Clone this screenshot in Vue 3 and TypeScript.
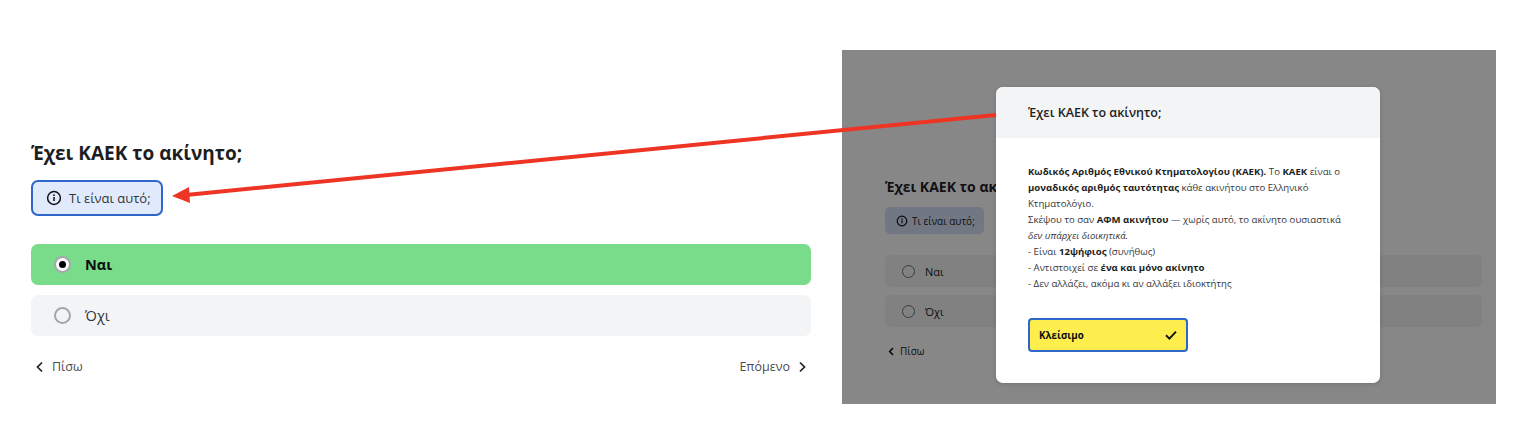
<template>
  <div class="stage">
    <section class="form">
      <h1 class="title">Έχει ΚΑΕΚ το ακίνητο;</h1>
      <button class="info-btn">
        <svg class="info-icon" width="16" height="16" viewBox="0 0 16 16">
          <circle cx="8" cy="8" r="6.4" fill="none" stroke="#111" stroke-width="1.5" />
          <rect x="7.3" y="7" width="1.5" height="4" fill="#111" />
          <circle cx="8" cy="5.2" r="0.9" fill="#111" />
        </svg>
        Τι είναι αυτό;
      </button>
      <div class="options">
        <div class="option selected">
          <span class="radio"><span class="dot"></span></span>
          <span>Ναι</span>
        </div>
        <div class="option">
          <span class="radio"></span>
          <span>Όχι</span>
        </div>
      </div>
      <div class="nav">
        <span class="nav-link">
          <svg width="12" height="12" viewBox="0 0 12 12"><path d="M8 1.5 3.5 6 8 10.5" fill="none" stroke="#222" stroke-width="1.7" /></svg>
          Πίσω
        </span>
        <span class="nav-link">
          Επόμενο
          <svg width="12" height="12" viewBox="0 0 12 12"><path d="M4 1.5 8.5 6 4 10.5" fill="none" stroke="#222" stroke-width="1.7" /></svg>
        </span>
      </div>
    </section>

    <section class="preview">
      <div class="behind">
        <h2 class="behind-title">Έχει ΚΑΕΚ το ακίνητο;</h2>
        <div class="behind-pill">
          <svg width="12" height="12" viewBox="0 0 16 16">
            <circle cx="8" cy="8" r="6.4" fill="none" stroke="#111" stroke-width="1.6" />
            <rect x="7.2" y="7" width="1.6" height="4" fill="#111" />
            <circle cx="8" cy="5.2" r="1" fill="#111" />
          </svg>
          Τι είναι αυτό;
        </div>
        <div class="behind-options">
          <div class="behind-option"><span class="behind-radio"></span>Ναι</div>
          <div class="behind-option"><span class="behind-radio"></span>Όχι</div>
        </div>
        <div class="behind-back">
          <svg width="9" height="9" viewBox="0 0 12 12"><path d="M8 1.5 3.5 6 8 10.5" fill="none" stroke="#111" stroke-width="2" /></svg>
          Πίσω
        </div>
      </div>
      <div class="scrim"></div>
      <div class="modal">
        <div class="modal-header">Έχει ΚΑΕΚ το ακίνητο;</div>
        <div class="modal-body">
          <p>
            <strong>Κωδικός Αριθμός Εθνικού Κτηματολογίου (ΚΑΕΚ).</strong> Το <strong>ΚΑΕΚ</strong> είναι ο<br />
            <strong>μοναδικός αριθμός ταυτότητας</strong> κάθε ακινήτου στο Ελληνικό<br />
            Κτηματολόγιο.<br />
            Σκέψου το σαν <strong>ΑΦΜ ακινήτου</strong> — χωρίς αυτό, το ακίνητο ουσιαστικά<br />
            <em>δεν υπάρχει διοικητικά.</em><br />
            - Είναι <strong>12ψήφιος</strong> (συνήθως)<br />
            - Αντιστοιχεί σε <strong>ένα και μόνο ακίνητο</strong><br />
            - Δεν αλλάζει, ακόμα κι αν αλλάξει ιδιοκτήτης
          </p>
          <button class="close-btn">
            Κλείσιμο
            <svg width="12" height="12" viewBox="0 0 12 12"><path d="M1 6.3 4.4 9.6 11 2.6" fill="none" stroke="#111" stroke-width="1.9" /></svg>
          </button>
        </div>
      </div>
    </section>

    <svg class="arrow" width="1520" height="442" viewBox="0 0 1520 442">
      <line x1="996" y1="115" x2="186" y2="195" stroke="#ee3524" stroke-width="4" />
      <polygon points="172,196 189,187 190,203" fill="#ee3524" />
    </svg>
  </div>
</template>

<script setup lang="ts">
</script>

<style>
html,
body {
  margin: 0;
  background: #fff;
}
</style>

<style scoped>
.stage {
  position: relative;
  width: 1520px;
  height: 442px;
  overflow: hidden;
  display: flex;
  font-family: "Open Sans", "Noto Sans", sans-serif;
  color: #1f2024;
}

.form {
  width: 780px;
  margin-left: 31px;
  padding-top: 140px;
  box-sizing: border-box;
}

.title {
  margin: 0;
  height: 27px;
  font-size: 19px;
  line-height: 27px;
  font-weight: 700;
  color: #1d1e22;
}

.info-btn {
  display: flex;
  align-items: center;
  gap: 7px;
  width: 132px;
  height: 36px;
  margin-top: 13px;
  padding: 0 0 0 13px;
  box-sizing: border-box;
  background: #e0eafc;
  border: 2px solid #2f66c9;
  border-radius: 7px;
  font-family: inherit;
  font-size: 13px;
  color: #33353a;
}

.options {
  margin-top: 28px;
  display: flex;
  flex-direction: column;
  gap: 10px;
}

.option {
  display: flex;
  align-items: center;
  gap: 14px;
  height: 41px;
  padding-left: 23px;
  background: #f3f4f6;
  border-radius: 7px;
  font-size: 14.5px;
  color: #33353a;
}

.option.selected {
  background: #79dc8a;
  color: #0c0d0f;
  font-weight: 700;
}

.radio {
  width: 17px;
  height: 17px;
  box-sizing: border-box;
  border: 2px solid #a6a7ab;
  border-radius: 50%;
  display: flex;
  align-items: center;
  justify-content: center;
}

.selected .radio {
  background: #fff;
}

.dot {
  width: 7px;
  height: 7px;
  border-radius: 50%;
  background: #000;
}

.nav {
  margin-top: 22px;
  display: flex;
  justify-content: space-between;
  padding: 0 3px;
  font-size: 12.5px;
  color: #4a4c52;
}

.nav-link {
  display: flex;
  align-items: center;
  gap: 6px;
}

.preview {
  position: relative;
  width: 654px;
  height: 354px;
  margin-top: 50px;
  margin-left: 31px;
  background: #fff;
  overflow: hidden;
}

.behind {
  padding: 127px 14px 0 43px;
}

.behind-title {
  margin: 0;
  height: 19px;
  font-size: 14px;
  line-height: 19px;
  font-weight: 700;
}

.behind-pill {
  display: flex;
  align-items: center;
  gap: 4px;
  width: 99px;
  height: 27px;
  margin-top: 11px;
  padding-left: 11px;
  box-sizing: border-box;
  background: #d6e1f7;
  border-radius: 5px;
  font-size: 10px;
}

.behind-options {
  margin-top: 21px;
  display: flex;
  flex-direction: column;
  gap: 8px;
}

.behind-option {
  display: flex;
  align-items: center;
  gap: 10px;
  height: 32px;
  padding-left: 17px;
  background: #f3f4f6;
  border-radius: 5px;
  font-size: 11px;
}

.behind-radio {
  width: 13px;
  height: 13px;
  box-sizing: border-box;
  border: 1.2px solid #6f7177;
  border-radius: 50%;
}

.behind-back {
  margin-top: 17px;
  display: flex;
  align-items: center;
  gap: 4px;
  padding-left: 2px;
  font-size: 10px;
}

.scrim {
  position: absolute;
  inset: 0;
  background: rgba(0, 0, 0, 0.47);
}

.modal {
  position: absolute;
  left: 154px;
  top: 37px;
  width: 383.5px;
  height: 296px;
  background: #fff;
  border-radius: 7px;
  overflow: hidden;
  box-shadow: 0 1px 4px rgba(0, 0, 0, 0.15);
}

.modal-header {
  height: 51px;
  padding-left: 32px;
  background: #f3f4f6;
  font-size: 12.5px;
  font-weight: 600;
  line-height: 51px;
  color: #1d1e22;
}

.modal-body {
  padding: 26px 0 0 32px;
  color: #33353a;
}

.modal-body p {
  margin: 0;
  font-size: 9.6px;
  line-height: 16px;
  white-space: nowrap;
}

.modal-body strong {
  color: #1d1e22;
}

.close-btn {
  display: flex;
  align-items: center;
  justify-content: space-between;
  width: 160px;
  height: 34px;
  margin-top: 26px;
  padding: 0 9px 0 9px;
  box-sizing: border-box;
  background: #fdee4e;
  border: 2px solid #2f66c9;
  border-radius: 4px;
  font-family: inherit;
  font-size: 9.8px;
  font-weight: 700;
  color: #0c0d0f;
}

.arrow {
  position: absolute;
  left: 0;
  top: 0;
  pointer-events: none;
}
</style>
